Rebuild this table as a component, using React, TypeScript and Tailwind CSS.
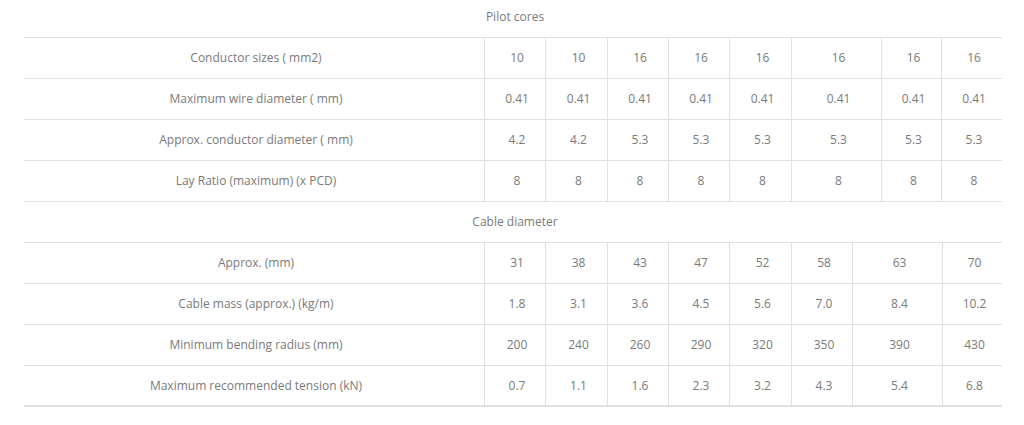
const pilotCols = "grid-cols-[460px_61px_62px_61px_61px_62px_90px_60px_61px]";
const cableCols = "grid-cols-[460px_61px_62px_61px_61px_62px_61px_90px_60px]";

const pilotRows: [string, string[]][] = [
  ["Conductor sizes ( mm2)", ["10", "10", "16", "16", "16", "16", "16", "16"]],
  ["Maximum wire diameter ( mm)", ["0.41", "0.41", "0.41", "0.41", "0.41", "0.41", "0.41", "0.41"]],
  ["Approx. conductor diameter ( mm)", ["4.2", "4.2", "5.3", "5.3", "5.3", "5.3", "5.3", "5.3"]],
  ["Lay Ratio (maximum) (x PCD)", ["8", "8", "8", "8", "8", "8", "8", "8"]],
];

const cableRows: [string, string[]][] = [
  ["Approx. (mm)", ["31", "38", "43", "47", "52", "58", "63", "70"]],
  ["Cable mass (approx.) (kg/m)", ["1.8", "3.1", "3.6", "4.5", "5.6", "7.0", "8.4", "10.2"]],
  ["Minimum bending radius (mm)", ["200", "240", "260", "290", "320", "350", "390", "430"]],
  ["Maximum recommended tension (kN)", ["0.7", "1.1", "1.6", "2.3", "3.2", "4.3", "5.4", "6.8"]],
];

function Section({ title, cols, rows, first }: { title: string; cols: string; rows: [string, string[]][]; first?: boolean }) {
  return (
    <div>
      {/* Section heading */}
      <div
        className={`${first ? "h-[38px] pb-[4px]" : "h-[41px]"} flex items-center justify-center pl-1 border-b border-[#e0e0e0]`}
      >
        {title}
      </div>
      {rows.map(([label, values], i) => (
        <div
          key={label}
          className={`grid ${cols} h-[41px] border-b ${
            i === rows.length - 1 && !first ? "border-b-2" : ""
          } border-[#e0e0e0]`}
        >
          <div className="flex items-center justify-center pl-1">{label}</div>
          {values.map((v, j) => (
            <div key={j} className="flex items-center justify-center pl-1 border-l border-[#e0e0e0]">
              {v}
            </div>
          ))}
        </div>
      ))}
    </div>
  );
}

export default function App() {
  return (
    <div
      className="w-[1024px] h-[425px] bg-white text-[12px] text-[#7a7a7a] overflow-hidden"
      style={{ fontFamily: '"Open Sans", "Liberation Sans", sans-serif' }}
    >
      <div className="ml-[24px] w-[978px]">
        <Section title="Pilot cores" cols={pilotCols} rows={pilotRows} first />
        <Section title="Cable diameter" cols={cableCols} rows={cableRows} />
      </div>
    </div>
  );
}
